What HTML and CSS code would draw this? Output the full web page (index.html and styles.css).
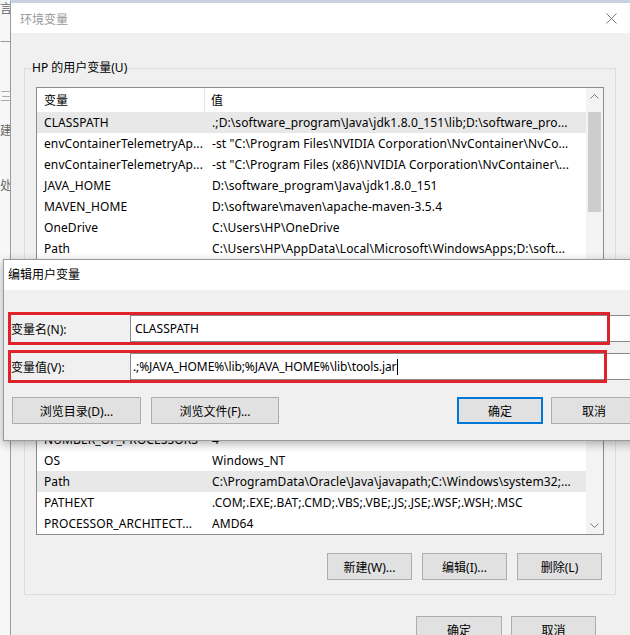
FILE: index.html
```html
<!DOCTYPE html>
<html lang="zh-CN">
<head>
<meta charset="utf-8">
<title>环境变量</title>
<link rel="stylesheet" href="styles.css">
</head>
<body>
<div class="desk">
  <div class="bgwin">
    <span class="g g1">言</span>
    <span class="g g2">一</span>
    <span class="g g3">三</span>
    <span class="g g4">建</span>
    <span class="g g5">处</span>
  </div>

  <div class="win">
    <div class="titlebar">
      <span class="wtitle">环境变量</span>
      <svg class="close" width="11" height="11" viewBox="0 0 11 11"><path d="M0.5 0.5L10.5 10.5M10.5 0.5L0.5 10.5" stroke="#7a7a7a" stroke-width="1" fill="none"/></svg>
    </div>
    <div class="wbody">
      <fieldset class="group g-user">
        <legend>HP 的用户变量(U)</legend>
        <div class="list l-user">
          <div class="list-main">
            <div class="lhead"><div class="h1">变量</div><div class="h2">值</div></div>
            <div class="row sel"><div class="c1">CLASSPATH</div><div class="c2">.;D:\software_program\Java\jdk1.8.0_151\lib;D:\software_pro...</div></div>
            <div class="row"><div class="c1">envContainerTelemetryAp...</div><div class="c2">-st "C:\Program Files\NVIDIA Corporation\NvContainer\NvCo...</div></div>
            <div class="row"><div class="c1">envContainerTelemetryAp...</div><div class="c2">-st "C:\Program Files (x86)\NVIDIA Corporation\NvContainer\...</div></div>
            <div class="row"><div class="c1">JAVA_HOME</div><div class="c2">D:\software_program\Java\jdk1.8.0_151</div></div>
            <div class="row"><div class="c1">MAVEN_HOME</div><div class="c2">D:\software\maven\apache-maven-3.5.4</div></div>
            <div class="row"><div class="c1">OneDrive</div><div class="c2">C:\Users\HP\OneDrive</div></div>
            <div class="row"><div class="c1">Path</div><div class="c2">C:\Users\HP\AppData\Local\Microsoft\WindowsApps;D:\soft...</div></div>
            <div class="row"><div class="c1">TEMP</div><div class="c2">C:\Users\HP\AppData\Local\Temp</div></div>
          </div>
          <div class="sbar">
            <div class="arr"><svg width="9" height="5" viewBox="0 0 9 5"><polyline points="0.5,4.5 4.5,0.5 8.5,4.5" fill="none" stroke="#7a7a7a"/></svg></div>
            <div class="thumb"></div>
          </div>
        </div>
        <div class="btnrow">
          <button class="btn w85">新建(N)...</button>
          <button class="btn w85">编辑(E)...</button>
          <button class="btn w85">删除(D)</button>
        </div>
      </fieldset>

      <fieldset class="group g-sys">
        <legend>系统变量(S)</legend>
        <div class="list l-sys">
          <div class="list-main">
            <div class="lhead"><div class="h1">变量</div><div class="h2">值</div></div>
            <div class="row"><div class="c1">asl.log</div><div class="c2">Destination=file</div></div>
            <div class="row"><div class="c1">ComSpec</div><div class="c2">C:\Windows\system32\cmd.exe</div></div>
            <div class="row"><div class="c1">DriverData</div><div class="c2">C:\Windows\System32\Drivers\DriverData</div></div>
            <div class="row"><div class="c1">NUMBER_OF_PROCESSORS</div><div class="c2">4</div></div>
            <div class="row"><div class="c1">OS</div><div class="c2">Windows_NT</div></div>
            <div class="row sel"><div class="c1">Path</div><div class="c2">C:\ProgramData\Oracle\Java\javapath;C:\Windows\system32;...</div></div>
            <div class="row"><div class="c1">PATHEXT</div><div class="c2">.COM;.EXE;.BAT;.CMD;.VBS;.VBE;.JS;.JSE;.WSF;.WSH;.MSC</div></div>
            <div class="row"><div class="c1">PROCESSOR_ARCHITECT...</div><div class="c2">AMD64</div></div>
          </div>
          <div class="sbar">
            <div class="track"></div>
            <div class="arr"><svg width="9" height="5" viewBox="0 0 9 5"><polyline points="0.5,0.5 4.5,4.5 8.5,0.5" fill="none" stroke="#7a7a7a"/></svg></div>
          </div>
        </div>
        <div class="btnrow btnrow-sys">
          <button class="btn w85">新建(W)...</button>
          <button class="btn w85">编辑(I)...</button>
          <button class="btn w85">删除(L)</button>
        </div>
      </fieldset>

      <div class="footer">
        <button class="btn w86">确定</button>
        <button class="btn w85">取消</button>
      </div>
    </div>
  </div>

  <div class="dlg">
    <div class="dlg-title">编辑用户变量</div>
    <div class="dlg-body">
      <div class="field">
        <label class="flabel">变量名(N):</label>
        <div class="finput">CLASSPATH</div>
      </div>
      <div class="field">
        <label class="flabel">变量值(V):</label>
        <div class="finput fi2">.;%JAVA_HOME%\lib;%JAVA_HOME%\lib\tools.jar<span class="caret"></span></div>
      </div>
      <div class="dbtns">
        <button class="btn b-dir">浏览目录(D)...</button>
        <button class="btn b-file">浏览文件(F)...</button>
        <button class="btn b-ok">确定</button>
        <button class="btn b-cancel">取消</button>
      </div>
    </div>
    <div class="mark m1"></div>
    <div class="mark m2"></div>
  </div>
</div>
</body>
</html>
```
FILE: styles.css
```css
* { box-sizing: border-box; }
html, body { margin: 0; padding: 0; }
body {
  width: 630px;
  height: 635px;
  overflow: hidden;
  font-family: "Noto Sans", "Noto Sans CJK SC", sans-serif;
  font-size: 12px;
  color: #000;
  background: #f4f4f4;
}

.desk {
  position: relative;
  width: 630px;
  height: 635px;
  overflow: hidden;
  display: flex;
}

/* background window strip on the left */
.bgwin {
  width: 10px;
  flex: none;
  background: #f6f7f9;
  overflow: hidden;
  display: flex;
  flex-direction: column;
  color: #666;
  line-height: 14px;
  font-family: "Noto Sans CJK SC", sans-serif;
}
.bgwin .g { display: block; white-space: nowrap; }
.g1 { margin-top: 1px; }
.g2 { margin-top: 20px; color: #999; }
.g3 { margin-top: 40px; color: #aaa; }
.g4 { margin-top: 20px; }
.g5 { margin-top: 41px; }

/* main window */
.win {
  flex: 1;
  min-width: 0;
  border-top: 3px solid #c7d1e1;
  border-left: 1px solid #9a9a9a;
  display: flex;
  flex-direction: column;
}
.titlebar {
  height: 30px;
  flex: none;
  background: #fff;
  display: flex;
  align-items: center;
  justify-content: space-between;
  padding: 0 13px 0 9px;
}
.wtitle { color: #999; font-family: "Noto Sans CJK SC", sans-serif; }
.close { display: block; }

.wbody {
  flex: 1;
  background: #f0f0f0;
  padding: 27px 14px 0 13px;
}

fieldset.group {
  margin: 0;
  border: 1px solid #dcdcdc;
  padding: 11px 11px 10px 11px;
  min-width: 0;
}
fieldset.group legend {
  padding: 0;
  margin-left: -4px;
  line-height: 16px;
  font-size: 12px;
}
.g-sys { margin-top: 6px !important; padding-bottom: 14px !important; }

.list {
  border: 1px solid #8c8c8c;
  background: #fff;
  display: flex;
  overflow: hidden;
}
.l-user { height: 173px; }
.l-sys { height: 194px; }
.list-main { flex: 1; min-width: 0; overflow: hidden; }

.lhead { display: flex; height: 24px; }
.lhead .h1 {
  width: 168px;
  padding-left: 7px;
  border-right: 1px solid #e5e5e5;
  display: flex;
  align-items: center;
}
.lhead .h2 { padding-left: 6px; display: flex; align-items: center; }

.row { display: flex; height: 21px; align-items: center; white-space: nowrap; letter-spacing: 0.1px; }
.row .c1 { width: 175px; flex: none; padding-left: 7px; overflow: hidden; }
.row .c2 { flex: 1; min-width: 0; overflow: hidden; }
.row.sel { background: #e8e8e8; }

.sbar {
  width: 17px;
  flex: none;
  background: #f3f3f3;
  display: flex;
  flex-direction: column;
}
.sbar .arr { height: 17px; flex: none; display: flex; align-items: center; justify-content: center; }
.sbar .arr svg { display: block; }
.thumb { margin: 7px 2px 0 2px; height: 100px; background: #cdcdcd; }
.track { flex: 1; }

.btn {
  font-family: "Noto Sans", "Noto Sans CJK SC", sans-serif;
  font-size: 12px;
  color: #000;
  height: 27px;
  background: #e1e1e1;
  border: 1px solid #adadad;
  padding: 0;
  display: flex;
  align-items: center;
  justify-content: center;
  white-space: nowrap;
}
.w85 { width: 85px; }
.w86 { width: 86px; }

.btnrow {
  display: flex;
  justify-content: flex-end;
  gap: 10px;
  margin-top: 10px;
  padding-right: 2px;
}
.btnrow-sys { margin-top: 18px; }

.footer {
  display: flex;
  justify-content: flex-end;
  gap: 9px;
  margin-top: 21px;
  padding-right: 20px;
}

/* edit dialog */
.dlg {
  position: absolute;
  left: 3px;
  top: 259px;
  width: 680px;
  height: 182px;
  border: 1px solid #9a9a9a;
  background: #f0f0f0;
  box-shadow: 0 3px 9px rgba(0, 0, 0, 0.3);
  display: flex;
  flex-direction: column;
}
.dlg-title {
  height: 30px;
  flex: none;
  background: #fff;
  padding: 0 4px 3px 4px;
  display: flex;
  align-items: center;
}
.dlg-body { flex: 1; padding: 25px 0 0 7px; }

.field { display: flex; align-items: center; height: 27px; }
.field + .field { margin-top: 11px; }
.flabel { width: 119px; flex: none; }
.finput {
  width: 520px;
  height: 27px;
  flex: none;
  border: 1px solid #8a8a8a;
  background: #fff;
  padding-left: 4px;
  display: flex;
  align-items: center;
  white-space: nowrap;
}
.fi2 { padding-left: 2px; letter-spacing: -0.1px; }
.caret { display: inline-block; width: 1px; height: 16px; background: #000; margin-left: 1px; }

.dbtns { display: flex; margin-top: 17px; padding-left: 1px; }
.b-dir { width: 129px; }
.b-file { width: 128px; margin-left: 10px; }
.b-ok { width: 86px; margin-left: 178px; border: 2px solid #0078d7; }
.b-cancel { width: 86px; margin-left: 8px; }

.mark {
  position: absolute;
  left: 4px;
  height: 33px;
  border: 3px solid #e0222b;
  pointer-events: none;
}
.m1 { top: 52px; width: 602px; }
.m2 { top: 90px; width: 599px; }
```
